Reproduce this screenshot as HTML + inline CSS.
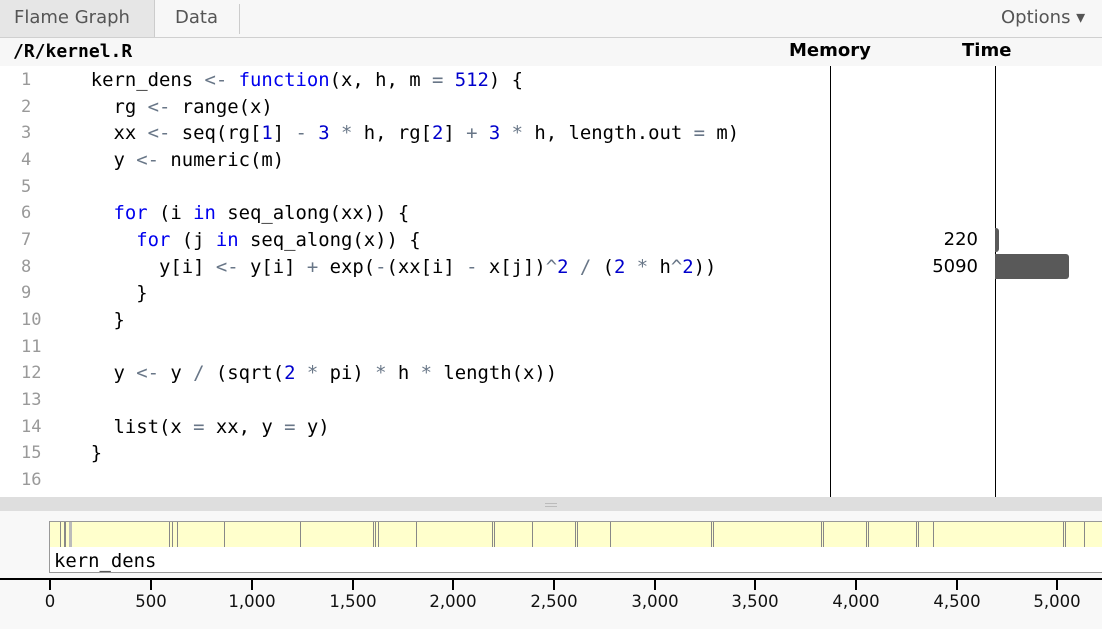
<!DOCTYPE html>
<html><head><style>
*{margin:0;padding:0;box-sizing:border-box}
body{width:1102px;height:629px;position:relative;overflow:hidden;background:#fff;font-family:"DejaVu Sans","Liberation Sans",sans-serif;}
.a{position:absolute}
.code{font-family:"DejaVu Sans Mono","Liberation Mono",monospace;font-size:18.9px;white-space:pre;line-height:26.67px}
.k{color:#0000ee}.o{color:#687687}.n{color:#0000cc}
.ln{color:#999;text-align:left}
.fl{position:absolute;top:0;height:25px;width:1px;background:#888}
.tk{position:absolute;top:580px;width:2px;height:10px;background:#000}
.tl{position:absolute;top:592px;font-size:16.5px;width:80px;text-align:center;color:#111}
</style></head><body>
<div class="a" style="left:0;top:0;width:1102px;height:38px;background:#f7f7f7;border-bottom:1px solid #d0d0d0"></div>
<div class="a" style="left:0;top:0;width:155px;height:37px;background:#e6e6e6;border-right:1px solid #ccc"></div>
<div class="a" style="left:14px;top:7px;font-size:18px;color:#555">Flame Graph</div>
<div class="a" style="left:175px;top:7px;font-size:18px;color:#555">Data</div>
<div class="a" style="left:239px;top:4px;width:1px;height:30px;background:#ccc"></div>
<div class="a" style="left:1001px;top:7px;font-size:18px;color:#555">Options ▾</div>
<div class="a" style="left:0;top:38px;width:1102px;height:28px;background:#f7f7f7"></div>
<div class="a" style="left:13px;top:41px;font-family:'DejaVu Sans Mono',monospace;font-weight:bold;font-size:18px">/R/kernel.R</div>
<div class="a" style="left:789px;top:40px;font-weight:bold;font-size:18px">Memory</div>
<div class="a" style="left:962px;top:40px;font-weight:bold;font-size:18px">Time</div>
<div class="a" style="left:830px;top:66px;width:1px;height:431px;background:#000"></div>
<div class="a" style="left:995px;top:66px;width:1px;height:431px;background:#000"></div>
<div class="a code ln" style="left:21px;top:67px;font-size:17px">1
2
3
4
5
6
7
8
9
10
11
12
13
14
15
16</div>
<div class="a code" style="left:68px;top:67px">  kern_dens <span class="o">&lt;-</span> <span class="k">function</span>(x, h, m <span class="o">=</span> <span class="n">512</span>) {
    rg <span class="o">&lt;-</span> range(x)
    xx <span class="o">&lt;-</span> seq(rg[<span class="n">1</span>] <span class="o">-</span> <span class="n">3</span> <span class="o">*</span> h, rg[<span class="n">2</span>] <span class="o">+</span> <span class="n">3</span> <span class="o">*</span> h, length.out <span class="o">=</span> m)
    y <span class="o">&lt;-</span> numeric(m)

    <span class="k">for</span> (i <span class="k">in</span> seq_along(xx)) {
      <span class="k">for</span> (j <span class="k">in</span> seq_along(x)) {
        y[i] <span class="o">&lt;-</span> y[i] <span class="o">+</span> exp(<span class="o">-</span>(xx[i] <span class="o">-</span> x[j])<span class="o">^</span><span class="n">2</span> <span class="o">/</span> (<span class="n">2</span> <span class="o">*</span> h<span class="o">^</span><span class="n">2</span>))
      }
    }

    y <span class="o">&lt;-</span> y <span class="o">/</span> (sqrt(<span class="n">2</span> <span class="o">*</span> pi) <span class="o">*</span> h <span class="o">*</span> length(x))

    list(x <span class="o">=</span> xx, y <span class="o">=</span> y)
  }
</div>
<div class="a code" style="left:900px;top:227px;width:78px;text-align:right;font-family:'DejaVu Sans',sans-serif;font-size:18px">220</div>
<div class="a code" style="left:900px;top:254px;width:78px;text-align:right;font-family:'DejaVu Sans',sans-serif;font-size:18px">5090</div>
<div class="a" style="left:995px;top:228px;width:4px;height:24px;background:#595959;border-radius:0 3px 3px 0"></div>
<div class="a" style="left:995px;top:254px;width:74px;height:25px;background:#595959;border-radius:0 3px 3px 0"></div>
<div class="a" style="left:0;top:497px;width:1102px;height:14px;background:#dedede"></div>
<div class="a" style="left:545px;top:503px;width:12px;height:1px;background:#bbb"></div>
<div class="a" style="left:545px;top:506px;width:12px;height:1px;background:#bbb"></div>
<div class="a" style="left:0;top:511px;width:1102px;height:118px;background:#f8f8f8"></div>
<div class="a" style="left:49px;top:521px;width:1054px;height:27px;background:#ffffcc;border:1px solid #999">
<div class="fl" style="left:10px"></div><div class="fl" style="left:14px;width:2px"></div><div class="fl" style="left:19px;width:3px;background:#bbb"></div><div class="fl" style="left:119px"></div><div class="fl" style="left:122px"></div><div class="fl" style="left:127px"></div><div class="fl" style="left:174px"></div><div class="fl" style="left:250px"></div><div class="fl" style="left:323px"></div><div class="fl" style="left:325px"></div><div class="fl" style="left:328px"></div><div class="fl" style="left:366px"></div><div class="fl" style="left:442px"></div><div class="fl" style="left:444px"></div><div class="fl" style="left:482px"></div><div class="fl" style="left:525px"></div><div class="fl" style="left:527px"></div><div class="fl" style="left:560px"></div><div class="fl" style="left:661px"></div><div class="fl" style="left:663px"></div><div class="fl" style="left:771px"></div><div class="fl" style="left:773px"></div><div class="fl" style="left:816px"></div><div class="fl" style="left:818px"></div><div class="fl" style="left:866px"></div><div class="fl" style="left:868px"></div><div class="fl" style="left:883px"></div><div class="fl" style="left:1013px"></div><div class="fl" style="left:1015px"></div><div class="fl" style="left:1034px"></div>
</div>
<div class="a" style="left:49px;top:547px;width:1054px;height:26px;background:#fff;border:1px solid #999;border-top:none"></div>
<div class="a code" style="left:54px;top:548px;line-height:26px">kern_dens</div>
<div class="a" style="left:0;top:578px;width:1102px;height:2px;background:#000"></div>
<div class="tk" style="left:49px"></div><div class="tl" style="left:10px">0</div>
<div class="tk" style="left:150px"></div><div class="tl" style="left:111px">500</div>
<div class="tk" style="left:251px"></div><div class="tl" style="left:212px">1,000</div>
<div class="tk" style="left:352px"></div><div class="tl" style="left:313px">1,500</div>
<div class="tk" style="left:452px"></div><div class="tl" style="left:413px">2,000</div>
<div class="tk" style="left:553px"></div><div class="tl" style="left:514px">2,500</div>
<div class="tk" style="left:654px"></div><div class="tl" style="left:615px">3,000</div>
<div class="tk" style="left:754px"></div><div class="tl" style="left:715px">3,500</div>
<div class="tk" style="left:855px"></div><div class="tl" style="left:816px">4,000</div>
<div class="tk" style="left:956px"></div><div class="tl" style="left:917px">4,500</div>
<div class="tk" style="left:1056px"></div><div class="tl" style="left:1017px">5,000</div>
</body></html>
